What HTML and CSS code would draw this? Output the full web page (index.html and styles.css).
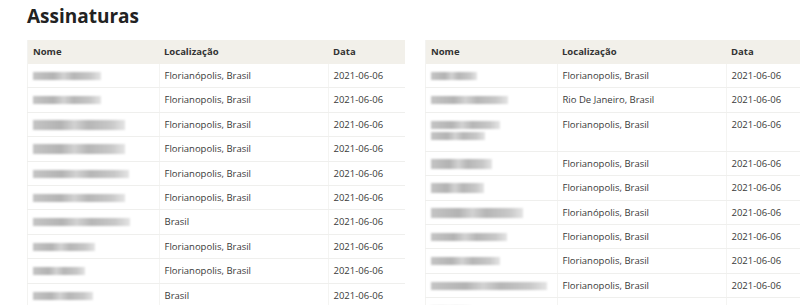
FILE: index.html
```html
<!DOCTYPE html>
<html lang="pt">
<head>
<meta charset="utf-8">
<link rel="stylesheet" href="styles.css">
</head>
<body>
<h1 class="title">Assinaturas</h1>
<div class="tables">
  <table class="sig">
    <thead><tr><th class="c-name">Nome</th><th class="c-loc">Localização</th><th class="c-date">Data</th></tr></thead>
    <tbody>
      <tr><td><span class="blur" style="width:68px"></span></td><td>Florianópolis, Brasil</td><td>2021-06-06</td></tr>
      <tr><td><span class="blur" style="width:68px"></span></td><td>Florianopolis, Brasil</td><td>2021-06-06</td></tr>
      <tr><td><span class="blur tall" style="width:92px"></span></td><td>Florianopolis, Brasil</td><td>2021-06-06</td></tr>
      <tr><td><span class="blur tall" style="width:92px"></span></td><td>Florianopolis, Brasil</td><td>2021-06-06</td></tr>
      <tr><td><span class="blur" style="width:96px"></span></td><td>Florianopolis, Brasil</td><td>2021-06-06</td></tr>
      <tr><td><span class="blur" style="width:92px"></span></td><td>Florianopolis, Brasil</td><td>2021-06-06</td></tr>
      <tr><td><span class="blur" style="width:97px"></span></td><td>Brasil</td><td>2021-06-06</td></tr>
      <tr><td><span class="blur" style="width:62px"></span></td><td>Florianopolis, Brasil</td><td>2021-06-06</td></tr>
      <tr><td><span class="blur" style="width:52px"></span></td><td>Florianopolis, Brasil</td><td>2021-06-06</td></tr>
      <tr><td><span class="blur" style="width:60px"></span></td><td>Brasil</td><td>2021-06-06</td></tr>
    </tbody>
  </table>
  <table class="sig">
    <thead><tr><th class="c-name">Nome</th><th class="c-loc">Localização</th><th class="c-date">Data</th></tr></thead>
    <tbody>
      <tr><td><span class="blur" style="width:46px"></span></td><td>Florianopolis, Brasil</td><td>2021-06-06</td></tr>
      <tr><td><span class="blur" style="width:77px"></span></td><td>Rio De Janeiro, Brasil</td><td>2021-06-06</td></tr>
      <tr class="double"><td><span class="blur" style="width:69px"></span><span class="blur" style="width:54px"></span></td><td>Florianopolis, Brasil</td><td>2021-06-06</td></tr>
      <tr><td><span class="blur tall" style="width:61px"></span></td><td>Florianopolis, Brasil</td><td>2021-06-06</td></tr>
      <tr><td><span class="blur tall" style="width:53px"></span></td><td>Florianopolis, Brasil</td><td>2021-06-06</td></tr>
      <tr><td><span class="blur tall" style="width:92px"></span></td><td>Florianópolis, Brasil</td><td>2021-06-06</td></tr>
      <tr><td><span class="blur" style="width:76px"></span></td><td>Florianopolis, Brasil</td><td>2021-06-06</td></tr>
      <tr><td><span class="blur" style="width:69px"></span></td><td>Florianopolis, Brasil</td><td>2021-06-06</td></tr>
      <tr><td><span class="blur" style="width:116px"></span></td><td>Florianopolis, Brasil</td><td>2021-06-06</td></tr>
      <tr><td><span class="blur" style="width:40px"></span></td><td>Florianopolis, Brasil</td><td>2021-06-06</td></tr>
    </tbody>
  </table>
</div>
</body>
</html>
```
FILE: styles.css
```css
html, body {
  margin: 0;
  padding: 0;
  background: #fff;
  overflow: hidden;
}
body {
  width: 800px;
  height: 305px;
  padding-left: 27px;
  box-sizing: border-box;
  font-family: "Open Sans", "Liberation Sans", sans-serif;
  color: #333;
}
.title {
  margin: 0;
  padding-top: 3px;
  height: 37px;
  font-size: 19px;
  font-weight: 700;
  color: #222;
  line-height: 26px;
}
.tables {
  display: flex;
  align-items: flex-start;
  gap: 20px;
}
.sig {
  flex: 0 0 378px;
  width: 378px;
  border-collapse: collapse;
  table-layout: fixed;
  font-size: 9.5px;
  line-height: 14.4px;
  border-left: 1px solid #f3f3f1;
}
.c-name { width: 121px; }
.c-loc { width: 159px; }
.c-date { width: 67px; }
.sig th {
  background: #f2f0ea;
  text-align: left;
  font-weight: 700;
  color: #333;
  height: 24px;
  padding: 0 5px;
}
.sig td {
  padding: 5px 5px 4px 5px;
  vertical-align: top;
  border-bottom: 1px solid #efefed;
  border-right: 1px solid #f4f4f2;
  white-space: nowrap;
  color: #3a3a3a;
}
.sig .double td {
  height: 29px;
}
.sig td:last-child { border-right: none; }
.blur {
  display: block;
  height: 8px;
  margin: 3px 0 3.4px;
  background: linear-gradient(90deg, #c4c4c4 0%, #b3b3b3 30%, #d2d2d2 45%, #b6b6b6 60%, #c8c8c8 85%, #e4e4e4 100%);
  filter: blur(0.8px);
}
.blur.tall {
  height: 10px;
  margin: 2px 0 2.4px;
}
```
